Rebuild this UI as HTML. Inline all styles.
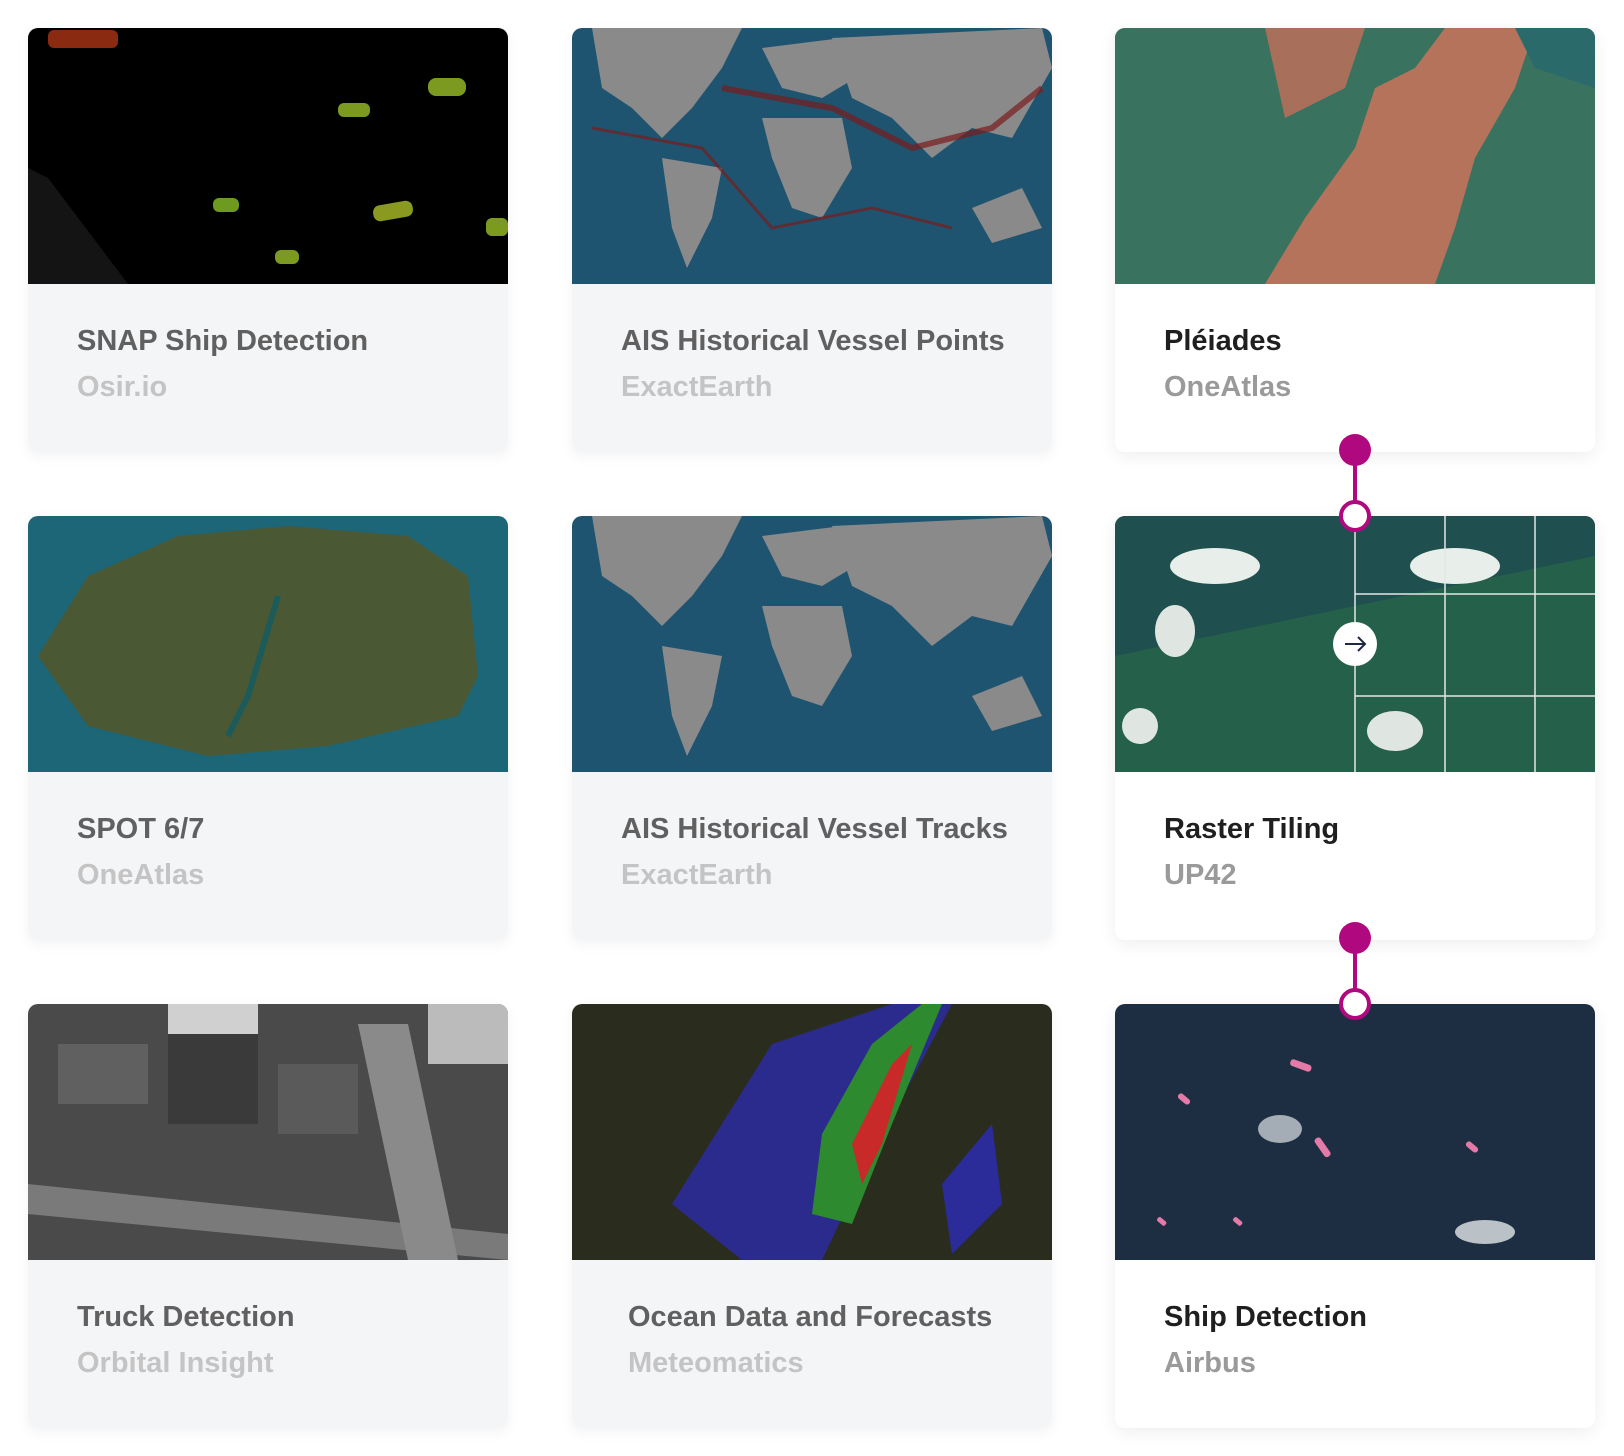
<!DOCTYPE html>
<html><head><meta charset="utf-8"><style>
*{margin:0;padding:0;box-sizing:border-box}
body{width:1624px;height:1456px;background:#fff;position:relative;overflow:hidden;font-family:"Liberation Sans",sans-serif}
.card{position:absolute;width:480px;height:424px;border-radius:10px;overflow:hidden;background:#f4f5f7;box-shadow:0 4px 14px rgba(0,0,0,0.05)}
.card.on{background:#fff;box-shadow:0 4px 18px rgba(0,0,0,0.07)}
.img{position:absolute;left:0;top:0;width:480px;height:256px;overflow:hidden}
.t{position:absolute;left:49px;top:297px;font-size:29px;font-weight:bold;color:#606060;white-space:nowrap}
.s{position:absolute;left:49px;top:343px;font-size:29px;font-weight:bold;color:#c4c4c4;white-space:nowrap}
.on .t{color:#1f1f1f}.on .s{color:#9a9a9a}
.dot{position:absolute;width:32px;height:32px;border-radius:50%;background:#b0087f}
.ring{position:absolute;width:32px;height:32px;border-radius:50%;background:#fff;border:4px solid #b0087f}
.line{position:absolute;width:4px;background:#b0087f}
</style></head><body>

<div class="card" style="left:28px;top:28px">
 <div class="img" style="background:#000">
  <svg width="480" height="256"><rect x="20" y="2" width="70" height="18" fill="#8a2a10" rx="6"/><rect x="400" y="50" width="38" height="18" rx="8" fill="#7c9a20"/><rect x="310" y="75" width="32" height="14" rx="6" fill="#7c9a20"/><rect x="185" y="170" width="26" height="14" rx="6" fill="#6f9a20"/><rect x="345" y="175" width="40" height="16" rx="7" transform="rotate(-10 365 183)" fill="#8a9a20"/><rect x="247" y="222" width="24" height="14" rx="6" fill="#7c9a20"/><rect x="458" y="190" width="22" height="18" rx="6" fill="#7c9a20"/><polygon points="0,140 20,150 100,256 0,256" fill="#141414"/></svg>
 </div>
 <div class="t">SNAP Ship Detection</div><div class="s">Osir.io</div>
</div>
<div class="card" style="left:572px;top:28px">
 <div class="img" style="background:#1e5470">
  <svg width="480" height="256"><g fill="#8a8a8a"><path d="M20 0 L170 0 L150 40 L120 80 L90 110 L60 80 L30 60 Z"/><path d="M90 130 L150 140 L140 190 L115 240 L100 200 Z"/><path d="M190 20 L270 10 L300 40 L250 70 L210 60 Z"/><path d="M190 90 L270 90 L280 140 L250 190 L220 180 L200 130 Z"/><path d="M260 10 L470 0 L480 40 L440 110 L400 100 L360 130 L320 90 L280 70 Z"/><path d="M400 180 L450 160 L470 200 L420 215 Z"/></g><g fill="#7a1c1c" opacity=".7"><path d="M150 60 L260 80 L340 120 L420 100 L470 60" stroke="#7a1c1c" stroke-width="6" fill="none"/><path d="M20 100 L130 120 L200 200 L300 180 L380 200" stroke="#7a1c1c" stroke-width="3" fill="none"/></g></svg>
 </div>
 <div class="t">AIS Historical Vessel Points</div><div class="s">ExactEarth</div>
</div>
<div class="card on" style="left:1115px;top:28px">
 <div class="img" style="background:#2f6a55">
  <svg width="480" height="256"><rect width="480" height="256" fill="#3a7260"/><path d="M150 256 L190 190 L240 120 L260 60 L300 40 L330 0 L420 0 L400 60 L360 130 L340 200 L320 256 Z" fill="#b4735a"/><path d="M150 0 L250 0 L230 60 L170 90 Z" fill="#a8705a"/><path d="M400 0 L480 0 L480 60 L420 40 Z" fill="#2a6a6a"/></svg>
 </div>
 <div class="t">Pléiades</div><div class="s">OneAtlas</div>
</div>

<div class="card" style="left:28px;top:516px">
 <div class="img" style="background:#1d6677">
  <svg width="480" height="256"><path d="M10 140 L60 60 L150 20 L260 10 L380 20 L440 60 L450 160 L430 200 L300 230 L180 240 L60 210 Z" fill="#4a5834"/><path d="M250 80 L220 180 L200 220" stroke="#1d5a5a" stroke-width="6" fill="none"/></svg>
 </div>
 <div class="t">SPOT 6/7</div><div class="s">OneAtlas</div>
</div>
<div class="card" style="left:572px;top:516px">
 <div class="img" style="background:#1e5470">
  <svg width="480" height="256"><g fill="#8a8a8a"><path d="M20 0 L170 0 L150 40 L120 80 L90 110 L60 80 L30 60 Z"/><path d="M90 130 L150 140 L140 190 L115 240 L100 200 Z"/><path d="M190 20 L270 10 L300 40 L250 70 L210 60 Z"/><path d="M190 90 L270 90 L280 140 L250 190 L220 180 L200 130 Z"/><path d="M260 10 L470 0 L480 40 L440 110 L400 100 L360 130 L320 90 L280 70 Z"/><path d="M400 180 L450 160 L470 200 L420 215 Z"/></g></svg>
 </div>
 <div class="t">AIS Historical Vessel Tracks</div><div class="s">ExactEarth</div>
</div>
<div class="card on" style="left:1115px;top:516px">
 <div class="img" style="background:#25604a">
  <svg width="480" height="256"><path d="M0 0 L480 0 L480 40 L0 140 Z" fill="#1f4f4e"/><ellipse cx="100" cy="50" rx="45" ry="18" fill="#e8eeea"/><ellipse cx="340" cy="50" rx="45" ry="18" fill="#e8eeea"/><ellipse cx="60" cy="115" rx="20" ry="26" fill="#dfe6e2"/><ellipse cx="25" cy="210" rx="18" ry="18" fill="#dfe6e2"/><ellipse cx="280" cy="215" rx="28" ry="20" fill="#dfe6e2"/><g stroke="#e6e6e6" stroke-width="1.5"><line x1="240" y1="0" x2="240" y2="256"/><line x1="330" y1="0" x2="330" y2="256"/><line x1="420" y1="0" x2="420" y2="256"/><line x1="240" y1="78" x2="480" y2="78"/><line x1="240" y1="180" x2="480" y2="180"/></g><circle cx="240" cy="128" r="22" fill="#fff"/><path d="M230 128 H250 M243 121 L250 128 L243 135" stroke="#1e2a44" stroke-width="2" fill="none"/></svg>
 </div>
 <div class="t">Raster Tiling</div><div class="s">UP42</div>
</div>

<div class="card" style="left:28px;top:1004px">
 <div class="img" style="background:#4a4a4a">
  <svg width="480" height="256"><rect x="140" y="30" width="90" height="90" fill="#3a3a3a"/><rect x="30" y="40" width="90" height="60" fill="#606060"/><rect x="250" y="60" width="80" height="70" fill="#5a5a5a"/><path d="M0 180 L480 230 L480 256 L0 210 Z" fill="#7a7a7a"/><path d="M330 20 L380 20 L430 256 L380 256 Z" fill="#8a8a8a"/><rect x="140" y="0" width="90" height="30" fill="#d0d0d0"/><rect x="400" y="0" width="80" height="60" fill="#bbb"/></svg>
 </div>
 <div class="t">Truck Detection</div><div class="s">Orbital Insight</div>
</div>
<div class="card" style="left:572px;top:1004px">
 <div class="img" style="background:#2a2d1e">
  <svg width="480" height="256"><path d="M100 200 L200 40 L320 0 L380 0 L300 150 L250 256 L170 256 Z" fill="#2b2b9a" opacity=".9"/><path d="M250 130 L300 40 L350 0 L370 0 L320 120 L280 220 L240 210 Z" fill="#2e8a2e"/><path d="M280 140 L320 60 L340 40 L310 140 L290 180 Z" fill="#c82a2a"/><path d="M370 180 L420 120 L430 200 L380 250 Z" fill="#2b2b9a"/></svg>
 </div>
 <div class="t" style="left:56px">Ocean Data and Forecasts</div><div class="s" style="left:56px">Meteomatics</div>
</div>
<div class="card on" style="left:1115px;top:1004px">
 <div class="img" style="background:#1d2e42">
  <svg width="480" height="256"><g fill="#e47aa8"><rect x="175" y="58" width="22" height="7" rx="3" transform="rotate(20 186 61)"/><rect x="62" y="92" width="14" height="6" rx="3" transform="rotate(40 69 95)"/><rect x="197" y="140" width="22" height="7" rx="3" transform="rotate(55 208 143)"/><rect x="350" y="140" width="14" height="6" rx="3" transform="rotate(40 357 143)"/><rect x="42" y="215" width="10" height="5" rx="2" transform="rotate(40 47 217)"/><rect x="118" y="215" width="10" height="5" rx="2" transform="rotate(40 123 217)"/></g><ellipse cx="165" cy="125" rx="22" ry="14" fill="#c7cdd2" opacity=".8"/><ellipse cx="370" cy="228" rx="30" ry="12" fill="#d6dade" opacity=".85"/></svg>
 </div>
 <div class="t">Ship Detection</div><div class="s">Airbus</div>
</div>

<div class="line" style="left:1353px;top:452px;height:64px"></div>
<div class="dot" style="left:1339px;top:434px"></div>
<div class="ring" style="left:1339px;top:500px"></div>
<div class="line" style="left:1353px;top:940px;height:64px"></div>
<div class="dot" style="left:1339px;top:922px"></div>
<div class="ring" style="left:1339px;top:988px"></div>
</body></html>
